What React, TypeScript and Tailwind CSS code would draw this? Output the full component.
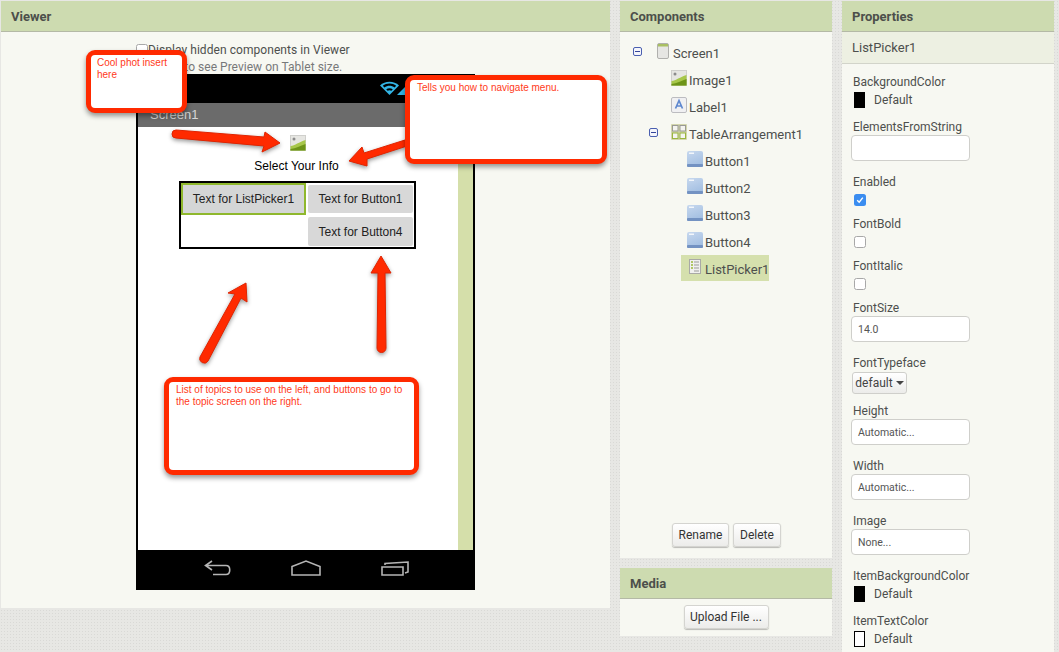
import type { ReactNode } from 'react';

const uiFont = 'font-["Roboto",sans-serif]';

function PanelHeader({ title }: { title: string }) {
  return (
    <div className="flex h-[31px] shrink-0 items-center border-b border-[#b4b9a6] bg-[#cddbb0] pl-[10px] pt-[2px] text-[13px] font-bold text-[#4c4f4b]">
      {title}
    </div>
  );
}

function Minus({ className }: { className: string }) {
  return (
    <span className={`absolute top-[9px] flex h-[9px] w-[9px] items-center justify-center rounded-[2px] border border-[#4a5fb0] bg-[#f4f5fb] ${className}`}>
      <span className="h-px w-[5px] bg-[#33459a]" />
    </span>
  );
}

function ScreenIcon() {
  return (
    <svg width="12" height="16" viewBox="0 0 12 16">
      <rect x="0.5" y="0.5" width="11" height="15" rx="1.5" fill="#e6e6e3" stroke="#b0b0ad" />
      <rect x="1" y="1" width="10" height="2.5" fill="#a9bf62" />
    </svg>
  );
}

function ImageIcon() {
  return (
    <svg width="16" height="16" viewBox="0 0 16 16">
      <rect x="0" y="0" width="16" height="16" rx="1" fill="#e6e6e2" />
      <rect x="0.25" y="0.25" width="15.5" height="15.5" rx="1" fill="none" stroke="#a9a9a6" strokeWidth="0.5" />
      <circle cx="4" cy="4" r="1.5" fill="#8b8b8b" />
      <path d="M0.5 11 C5 10.5 9 7 15.5 5 V15.5 H0.5 Z" fill="#a7c74a" />
      <path d="M0.5 14 C6 13.5 10 11 15.5 9 V15.5 H0.5 Z" fill="#6d9418" />
    </svg>
  );
}

function LabelIcon() {
  return (
    <svg width="16" height="16" viewBox="0 0 16 16">
      <rect x="0.5" y="0.5" width="15" height="15" rx="1.5" fill="#f0f0f2" stroke="#bcbcc0" />
      <path d="M4.5 11.5 L8 3.5 L11.5 11.5 M5.8 9 H10.2" fill="none" stroke="#5f88cf" strokeWidth="1.7" />
    </svg>
  );
}

function TableIcon() {
  return (
    <svg width="16" height="16" viewBox="0 0 16 16">
      <rect x="0" y="0" width="16" height="16" rx="1" fill="#d3d6ad" />
      <rect x="1.5" y="1.5" width="5.5" height="5.5" fill="#f4f4f0" stroke="#9a9a95" />
      <rect x="9" y="1.5" width="5.5" height="5.5" fill="#f4f4f0" stroke="#9a9a95" />
      <rect x="1.5" y="9" width="5.5" height="5.5" fill="#f4f4f0" stroke="#9ab53f" />
      <rect x="9" y="9" width="5.5" height="5.5" fill="#f4f4f0" stroke="#9ab53f" />
    </svg>
  );
}

function ButtonIcon() {
  return (
    <svg width="16" height="16" viewBox="0 0 16 16">
      <defs>
        <linearGradient id="btn" x1="0" y1="0" x2="0.4" y2="1">
          <stop offset="0" stopColor="#c7d8ee" />
          <stop offset="1" stopColor="#a3bfe2" />
        </linearGradient>
      </defs>
      <rect x="0" y="0" width="16" height="16" rx="2" fill="url(#btn)" />
      <rect x="0" y="13" width="16" height="3" rx="1" fill="#7392c2" />
      <rect x="2" y="1.5" width="5" height="1.5" fill="#fff" opacity="0.8" />
    </svg>
  );
}

function ListIcon() {
  return (
    <svg width="12" height="15" viewBox="0 0 12 15">
      <rect x="0.5" y="0.5" width="11" height="14" fill="#f0f0ee" stroke="#a9a9a6" />
      <path d="M2 3 H4 M2 6 H4 M2 9 H4" stroke="#9ab93a" strokeWidth="1.4" />
      <path d="M5 3 H10 M5 6 H10 M5 9 H10 M5 12 H10" stroke="#9b9b98" />
    </svg>
  );
}

function TreeRow({ toggle, icon, text, className, iconClass = 'w-[18px]' }: { toggle?: ReactNode; icon: ReactNode; text: string; className: string; iconClass?: string }) {
  return (
    <div className={`relative flex h-[27px] items-center ${className}`}>
      {toggle}
      <span className={`mb-[2px] flex shrink-0 ${iconClass}`}>{icon}</span>
      <span className="mt-[4px] text-[13px] leading-[15px] text-[#4d4f4d]">{text}</span>
    </div>
  );
}

function GrayButton({ children, className }: { children: ReactNode; className: string }) {
  return (
    <div className={`flex h-[24px] items-center justify-center rounded-[3px] border border-[#d4d4d0] bg-gradient-to-b from-white to-[#ececea] text-[12px] text-[#333] shadow-[0_1px_1px_rgba(0,0,0,0.25)] ${className}`}>
      {children}
    </div>
  );
}

function PropLabel({ children, className }: { children: ReactNode; className: string }) {
  return <div className={`ml-[11px] h-4 text-[12px] leading-4 text-[#4d4f4d] ${className}`}>{children}</div>;
}

function PropInput({ value }: { value?: string }) {
  return (
    <div className="ml-[9px] flex h-[26px] w-[119px] items-center rounded-[4px] border border-[#cfcfcb] bg-white pl-[6px] pt-px text-[10.5px] text-[#555]">
      {value}
    </div>
  );
}

function Swatch({ white, className }: { white?: boolean; className: string }) {
  return (
    <div className={`ml-[12px] flex h-4 items-center ${className}`}>
      <span className={white ? 'h-4 w-[11px] border border-black bg-white' : 'h-4 w-[11px] bg-black'} />
      <span className="ml-[9px] text-[12px] text-[#4d4f4d]">Default</span>
    </div>
  );
}

function Check({ checked, className }: { checked?: boolean; className: string }) {
  return checked ? (
    <div className={`ml-[12px] flex h-3 w-3 items-center justify-center rounded-[2.5px] bg-[#3b8df0] ${className}`}>
      <svg width="8" height="8" viewBox="0 0 8 8">
        <path d="M1.2 4.2 L3.2 6.2 L6.8 1.6" fill="none" stroke="#fff" strokeWidth="1.4" />
      </svg>
    </div>
  ) : (
    <div className={`ml-[12px] h-3 w-3 rounded-[2.5px] border border-[#a8a8a8] bg-white ${className}`} />
  );
}

function Callout({ className, children }: { className: string; children: ReactNode }) {
  return (
    <div className={`absolute rounded-[9px] border-[5px] border-[#ff2a00] bg-white pt-[2px] font-["Liberation_Sans",sans-serif] text-[10px] leading-[12px] text-[#ff3a1a] shadow-[0_3px_5px_rgba(0,0,0,0.4)] ${className}`}>
      {children}
    </div>
  );
}

function Arrows() {
  return (
    <svg className="pointer-events-none absolute left-0 top-0 drop-shadow-[0_2px_2px_rgba(0,0,0,0.4)]" width="1059" height="652" viewBox="0 0 1059 652">
      <g fill="#ff2a00" stroke="#e02400" strokeWidth="1" strokeLinejoin="round">
        <path d="M280 143 L262 152 L264 146 L176 138 A4 4 0 0 1 176 130 L264 137 L265 132 Z" />
        <path d="M349 161 L362 147 L364 153 L405 140 L407 146 L367 159 L367 166 Z" />
        <path d="M246 283 L247 302 L241 298 L208 361 A4.5 4.5 0 0 1 200 357 L235 294 L228 293 Z" />
        <path d="M381 256 L391 273 L385 273 L386 348 A4.5 4.5 0 0 1 377 348 L378 273 L371 273 Z" />
      </g>
    </svg>
  );
}

export default function App() {
  return (
    <div className={`relative flex h-[652px] w-[1059px] overflow-hidden bg-[#e7e7e4] bg-[radial-gradient(#d9d9d6_1px,transparent_1px)] bg-[length:3px_3px] pl-px pt-px ${uiFont}`}>
      {/* Viewer */}
      <div className="h-[607px] w-[609px] shrink-0 bg-[#f7f8f2]">
        <PanelHeader title="Viewer" />
        <div className="mx-auto flex w-[339px] flex-col">
          <div className="mt-[9px] flex h-[17px] items-center text-[12px] tracking-[0.06px] text-[#4d4f4d]">
            <span className="h-3 w-3 rounded-[2.5px] border border-[#a8a8a8] bg-white" />
            Display hidden components in Viewer
          </div>
          <div className="flex h-[17px] items-center text-[12px] tracking-[0.03px] text-[#77797a]">
            <span className="h-3 w-3 rounded-[2.5px] border border-[#a8a8a8] bg-white" />
            Check to see Preview on Tablet size.
          </div>
          {/* phone */}
          <div className="mt-[-1px] flex h-[516px] flex-col bg-black px-[2px] font-['Liberation_Sans',sans-serif]">
            <div className="flex h-[29px] shrink-0 items-center pl-[242px]">
              <svg width="26" height="15" viewBox="0 0 26 15">
                <path d="M9.5 14 L0 4.5 C5 -0.5 14 -0.5 19 4.5 Z" fill="#33b5e5" />
                <path d="M2.8 4.8 C6.5 1.8 12.5 1.8 16.2 4.8 L14.6 6.4 C11.6 4.2 7.4 4.2 4.4 6.4 Z" fill="#000" />
                <path d="M6.2 8.4 C8 7 11 7 12.8 8.4 L11.4 9.8 C10.2 9 8.8 9 7.6 9.8 Z" fill="#000" />
                <polygon points="17,14 25,14 25,6" fill="#33b5e5" />
              </svg>
            </div>
            <div className="flex h-[24px] shrink-0 items-center bg-[#6b6b6b] pl-[12px] text-[13px] text-[#d6d6d6]">Screen1</div>
            <div className="flex min-h-0 flex-1">
              <div className="flex flex-1 flex-col items-center bg-white pr-px pt-[8px]">
                <ImageIcon />
                <div className="mr-[2px] mt-[8px] h-[15px] text-[12px] leading-[15px] tracking-[0.02px] text-black">Select Your Info</div>
                <div className="mt-[7px] grid h-[68px] w-[237px] grid-cols-[125px_1fr] grid-rows-[32px_32px] border-2 border-black text-[12px] text-[#222]">
                  <div className="flex h-[32px] items-center justify-center border-2 border-[#8fb82d] bg-[#d4d6d6]">Text for ListPicker1</div>
                  <div className="ml-[2px] mr-[1px] mt-[2px] flex h-[28px] items-center justify-center rounded-[2px] bg-[#d8d8d8]">Text for Button1</div>
                  <div />
                  <div className="ml-[2px] mr-[1px] mt-[2px] flex h-[29px] items-center justify-center rounded-[2px] bg-[#d8d8d8]">Text for Button4</div>
                </div>
              </div>
              <div className="w-[15px] shrink-0 bg-[#d5dfaa]" />
            </div>
            <div className="flex h-[40px] shrink-0 items-center justify-center gap-[60px] pb-[4px] pl-[2px]">
              <svg width="27" height="16" viewBox="0 0 27 16" fill="none" stroke="#b5b5b5" strokeWidth="1.6">
                <path d="M8 1 L1.5 5.5 L8 10 M2 5.5 H22 C27 5.5 27 14.5 22 14.5 H9" />
              </svg>
              <svg width="30" height="16" viewBox="0 0 30 16" fill="none" stroke="#b5b5b5" strokeWidth="1.6">
                <path d="M1 6.5 L15 1 L29 6.5 V15 H1 Z" />
              </svg>
              <svg width="28" height="15" viewBox="0 0 28 15" fill="none" stroke="#b5b5b5" strokeWidth="1.6">
                <path d="M1 6 H22 V14 H1 Z M4 4 V2.5 L27 1 V11 L24 12" />
              </svg>
            </div>
          </div>
        </div>
      </div>

      {/* Components + Media */}
      <div className="ml-[10px] flex w-[212px] shrink-0 flex-col">
        <div className="flex h-[557px] flex-col bg-[#f7f8f2]">
          <PanelHeader title="Components" />
          <div className="flex-1 pt-[6px]">
            <TreeRow className="pl-[37px]" iconClass="w-[16px]" toggle={<Minus className="left-[13px]" />} icon={<ScreenIcon />} text="Screen1" />
            <TreeRow className="pl-[51px]" icon={<ImageIcon />} text="Image1" />
            <TreeRow className="pl-[51px]" icon={<LabelIcon />} text="Label1" />
            <TreeRow className="pl-[51px]" toggle={<Minus className="left-[29px]" />} icon={<TableIcon />} text="TableArrangement1" />
            <TreeRow className="pl-[67px]" icon={<ButtonIcon />} text="Button1" />
            <TreeRow className="pl-[67px]" icon={<ButtonIcon />} text="Button2" />
            <TreeRow className="pl-[67px]" icon={<ButtonIcon />} text="Button3" />
            <TreeRow className="pl-[67px]" icon={<ButtonIcon />} text="Button4" />
            <div className="ml-[61px] mt-px w-[88px] bg-[#d5e0ad] pl-[8px]">
              <div className="flex h-[26px] items-center">
                <span className="mb-[4px] flex w-[16px] shrink-0"><ListIcon /></span>
                <span className="mt-[3px] text-[13px] leading-[15px] text-[#4d4f4d]">ListPicker1</span>
              </div>
            </div>
          </div>
          <div className="flex justify-center gap-[4px] pb-[11px] pl-[1px]">
            <GrayButton className="w-[57px]">Rename</GrayButton>
            <GrayButton className="w-[48px]">Delete</GrayButton>
          </div>
        </div>
        <div className="mt-[10px] flex h-[68px] flex-col bg-[#f7f8f2]">
          <PanelHeader title="Media" />
          <div className="flex justify-center pt-[6px]">
            <GrayButton className="w-[85px]">Upload File ...</GrayButton>
          </div>
        </div>
      </div>

      {/* Properties */}
      <div className="ml-[10px] w-[212px] shrink-0 bg-[#f7f8f2]">
        <PanelHeader title="Properties" />
        <div className="flex h-[32px] items-center border-b border-[#d2d4ca] bg-[#edf0e2] pl-[10px] pt-px text-[13px] text-[#4d4f4d]">ListPicker1</div>
        <PropLabel className="mt-[10px]">BackgroundColor</PropLabel>
        <Swatch className="mt-[2px]" />
        <PropLabel className="mt-[11px]">ElementsFromString</PropLabel>
        <PropInput />
        <PropLabel className="mt-[13px]">Enabled</PropLabel>
        <Check checked className="mt-[4px]" />
        <PropLabel className="mt-[10px]">FontBold</PropLabel>
        <Check className="mt-[4px]" />
        <PropLabel className="mt-[10px]">FontItalic</PropLabel>
        <Check className="mt-[4px]" />
        <PropLabel className="mt-[10px]">FontSize</PropLabel>
        <PropInput value="14.0" />
        <PropLabel className="mt-[13px]">FontTypeface</PropLabel>
        <div className="ml-[10px] mt-px flex h-[22px] w-[55px] items-center justify-center gap-[3px] rounded-[3px] border border-[#cfcfcb] bg-gradient-to-b from-white to-[#ececea] text-[12px] text-[#444]">
          default
          <span className="h-0 w-0 border-x-[4px] border-t-[4px] border-x-transparent border-t-[#444]" />
        </div>
        <PropLabel className="mt-[9px]">Height</PropLabel>
        <PropInput value="Automatic..." />
        <PropLabel className="mt-[13px]">Width</PropLabel>
        <PropInput value="Automatic..." />
        <PropLabel className="mt-[13px]">Image</PropLabel>
        <PropInput value="None..." />
        <PropLabel className="mt-[13px]">ItemBackgroundColor</PropLabel>
        <Swatch className="mt-[2px]" />
        <PropLabel className="mt-[11px]">ItemTextColor</PropLabel>
        <Swatch white className="mt-[2px]" />
      </div>

      {/* Annotations on top of the screenshot */}
      <Arrows />
      <Callout className="left-[86px] top-[50px] h-[63px] w-[101px] px-[6px]">Cool phot insert here</Callout>
      <Callout className="left-[405px] top-[75px] h-[89px] w-[202px] px-[7px]">Tells you how to navigate menu.</Callout>
      <Callout className="left-[164px] top-[377px] h-[98px] w-[255px] px-[7px]">List of topics to use on the left, and buttons to go to the topic screen on the right.</Callout>
    </div>
  );
}
